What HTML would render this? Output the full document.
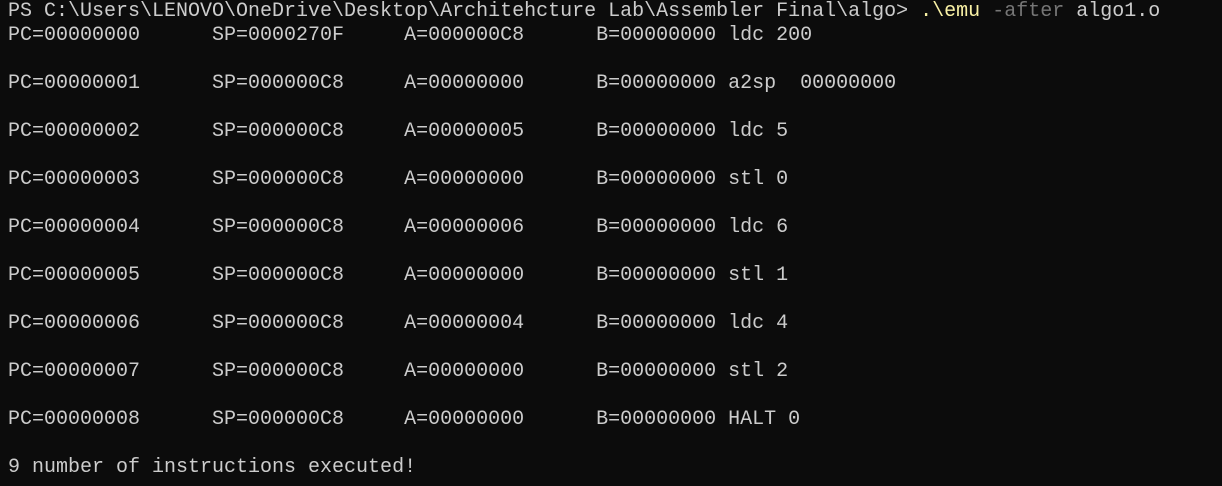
<!DOCTYPE html>
<html><head><style>
html,body{margin:0;padding:0;background:#0c0c0c;width:1222px;height:486px;overflow:hidden}
pre{margin:0;position:absolute;left:8px;top:0px;font-family:"Liberation Mono",monospace;font-size:20px;line-height:24px;color:#cccccc}
.y{color:#f9f1a5}.g{color:#767676}
</style></head><body>
<pre>PS C:\Users\LENOVO\OneDrive\Desktop\Architehcture Lab\Assembler Final\algo&gt; <span class="y">.\emu</span> <span class="g">-after</span> algo1.o
PC=00000000      SP=0000270F     A=000000C8      B=00000000 ldc 200

PC=00000001      SP=000000C8     A=00000000      B=00000000 a2sp  00000000

PC=00000002      SP=000000C8     A=00000005      B=00000000 ldc 5

PC=00000003      SP=000000C8     A=00000000      B=00000000 stl 0

PC=00000004      SP=000000C8     A=00000006      B=00000000 ldc 6

PC=00000005      SP=000000C8     A=00000000      B=00000000 stl 1

PC=00000006      SP=000000C8     A=00000004      B=00000000 ldc 4

PC=00000007      SP=000000C8     A=00000000      B=00000000 stl 2

PC=00000008      SP=000000C8     A=00000000      B=00000000 HALT 0

9 number of instructions executed!</pre>
</body></html>
